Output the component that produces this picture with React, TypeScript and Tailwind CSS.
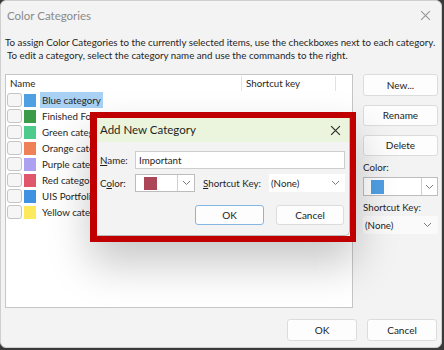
import React from "react";

const categories = [
  { name: "Blue category", color: "bg-[#4f9fe3]", selected: true },
  { name: "Finished Folders", color: "bg-[#3c9b49]" },
  { name: "Green category", color: "bg-[#4ccb8c]" },
  { name: "Orange category", color: "bg-[#ef8158]" },
  { name: "Purple category", color: "bg-[#aca1f1]" },
  { name: "Red category", color: "bg-[#e0566a]" },
  { name: "UIS Portfolio", color: "bg-[#3f92e2]" },
  { name: "Yellow category", color: "bg-[#fce95c]" },
];

function Chevron({ className = "" }: { className?: string }) {
  return (
    <svg width="9" height="6" viewBox="0 0 9 6" className={className}>
      <polyline
        points="1,1 4.5,4.5 8,1"
        fill="none"
        stroke="#7a7a7a"
        strokeWidth="1"
      />
    </svg>
  );
}

function CloseIcon({ size, color }: { size: number; color: string }) {
  return (
    <svg width={size} height={size} viewBox="0 0 10 10">
      <path d="M1 1L9 9M9 1L1 9" stroke={color} strokeWidth="1.1" />
    </svg>
  );
}

function Button({
  label,
  className = "",
}: {
  label: string;
  className?: string;
}) {
  return (
    <div
      className={`flex items-center justify-center rounded-[3px] border border-[#dcdcdc] bg-[#fdfdfd] text-[10px] text-[#1b1b1b] ${className}`}
    >
      {label}
    </div>
  );
}

export default function App() {
  return (
    <div className="relative h-[350px] w-[444px] overflow-hidden bg-[#3a3a3a] font-['Lato',sans-serif]">
      <div className="flex h-[348px] w-[442px] flex-col rounded-[6px] border border-[#cfcfcf] bg-[#f3f3f3]">
        <div className="flex h-[29px] items-center justify-between pl-[6px] pr-[10px]">
          <span className="text-[11.5px] text-[#8a8a8a]">Color Categories</span>
          <CloseIcon size={11} color="#9a9a9a" />
        </div>

        <div className="whitespace-nowrap pl-[4px] pt-[6px] text-[9.75px] leading-[13px] text-[#1f1f1f]">
          <p>
            To assign Color Categories to the currently selected items, use the
            checkboxes next to each category.
          </p>
          <p className="pl-[2px]">
            To edit a category, select the category name and use the commands
            to the right.
          </p>
        </div>

        <div className="mt-[12px] flex pl-[4px]">
          <div className="h-[234px] w-[348px] border border-[#c6c6c6] bg-white">
            <div className="flex h-[17px] items-center text-[9.75px] text-[#1f1f1f]">
              <span className="w-[235px] pl-[4px]">Name</span>
              <span className="h-[15px] w-px bg-[#e2e2e2]" />
              <span className="w-[93px] pl-[4px]">Shortcut key</span>
              <span className="h-[15px] w-px bg-[#e2e2e2]" />
            </div>
            {categories.map((cat) => (
              <div key={cat.name} className="flex h-[16px] items-center">
                <span className="ml-[1px] h-[14px] w-[15px] rounded-[3px] border border-[#c4c4c4] bg-[#f6f6f6]" />
                <span className={`ml-[2px] h-[13px] w-[12px] ${cat.color}`} />
                <span
                  className={`ml-[4px] flex h-[16px] items-center px-[2px] text-[9.75px] text-[#1f1f1f] ${
                    cat.selected ? "bg-[#a9d1f4]" : ""
                  }`}
                >
                  {cat.name}
                </span>
              </div>
            ))}
          </div>

          <div className="ml-[10px] flex w-[75px] flex-col">
            <Button label="New..." className="h-[22px]" />
            <Button label="Rename" className="mt-[9px] h-[21px]" />
            <Button label="Delete" className="mt-[9px] h-[21px]" />
            <span className="mt-[3px] text-[9.75px] leading-[16px] text-[#1f1f1f]">
              Color:
            </span>
            <div className="mt-[2px] flex h-[19px] items-stretch border border-[#bdbdbd] bg-white">
              <span className="ml-[7px] mt-[2px] h-[14px] w-[13px] bg-[#4f9fe3]" />
              <span className="flex-1" />
              <span className="flex w-[16px] items-center justify-center border-l border-[#cfcfcf]">
                <Chevron />
              </span>
            </div>
            <span className="mt-[3px] text-[9.75px] leading-[16px] text-[#1f1f1f]">
              Shortcut Key:
            </span>
            <div className="mt-[1px] flex h-[18px] items-center justify-between rounded-[2px] bg-[#fafafa] pl-[2px] pr-[6px] text-[9.75px] text-[#1f1f1f]">
              <span>(None)</span>
              <Chevron />
            </div>
          </div>
        </div>

        <div className="mt-[11px] flex justify-end gap-[10px] pr-[4px]">
          <Button label="OK" className="h-[22px] w-[70px]" />
          <Button label="Cancel" className="h-[22px] w-[70px]" />
        </div>
      </div>

      {/* Add New Category dialog, outlined in red */}
      <div className="absolute left-[90px] top-[112px] h-[130px] w-[266px] border-[6px] border-l-[7px] border-[#c00000] shadow-[0_22px_40px_rgba(0,0,0,0.22)]">
        <div className="flex h-full w-full flex-col rounded-br-[5px] border-b border-r border-[#b9b9b9] bg-[#f3f3f3]">
          <div className="flex h-[24px] items-center justify-between bg-[#ebf5dd] pl-[3px] pr-[8px]">
            <span className="text-[11.5px] text-[#1f1f1f]">Add New Category</span>
            <CloseIcon size={11} color="#303030" />
          </div>

          <div className="mt-[9px] flex items-center pl-[3px] pr-[4px] text-[9.75px] text-[#1f1f1f]">
            <span className="w-[35px] whitespace-nowrap">
              <span className="underline">N</span>ame:
            </span>
            <div className="flex h-[18px] flex-1 items-center border border-[#cdcdcd] bg-white pl-[3px]">
              Important
            </div>
          </div>

          <div className="mt-[5px] flex items-center pl-[3px] pr-[4px] text-[9.75px] text-[#1f1f1f]">
            <span className="w-[35px] whitespace-nowrap">
              C<span className="underline">o</span>lor:
            </span>
            <div className="flex h-[18px] w-[60px] items-stretch border border-[#bdbdbd] bg-white">
              <span className="ml-[8px] mt-[2px] h-[13px] w-[13px] bg-[#ab4557]" />
              <span className="flex-1" />
              <span className="flex w-[17px] items-center justify-center border-l border-[#cfcfcf]">
                <Chevron />
              </span>
            </div>
            <span className="ml-[8px] w-[66px] whitespace-nowrap">
              <span className="underline">S</span>hortcut Key:
            </span>
            <div className="flex h-[18px] flex-1 items-center justify-between bg-white pl-[2px] pr-[5px]">
              <span>(None)</span>
              <Chevron />
            </div>
          </div>

          <div className="mt-[13px] flex justify-end gap-[12px] pr-[5px]">
            <Button
              label="OK"
              className="h-[20px] w-[69px] !border-[#86b7e4]"
            />
            <Button label="Cancel" className="h-[20px] w-[68px]" />
          </div>
        </div>
      </div>
    </div>
  );
}
